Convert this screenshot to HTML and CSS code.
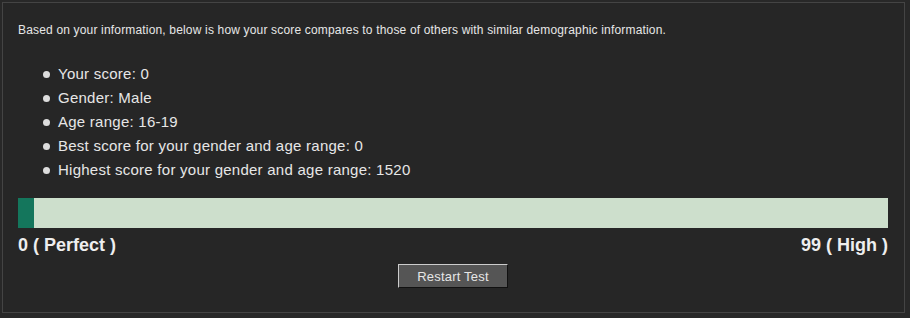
FILE: index.html
```html
<!DOCTYPE html>
<html lang="en">
<head>
    <meta charset="UTF-8">
    <title>Score Results</title>
    <link rel="stylesheet" href="styles.css">
</head>
<body>
    <div class="panel">
        <p class="intro">Based on your information, below is how your score compares to those of others with similar demographic information.</p>

        <ul class="stats">
            <li>Your score: 0</li>
            <li>Gender: Male</li>
            <li>Age range: 16-19</li>
            <li>Best score for your gender and age range: 0</li>
            <li>Highest score for your gender and age range: 1520</li>
        </ul>

        <div class="bar">
            <div class="bar-fill" style="width: 1.8%"></div>
        </div>
        <div class="bar-labels">
            <span>0 ( Perfect )</span>
            <span>99 ( High )</span>
        </div>

        <div class="actions">
            <button class="restart">Restart Test</button>
        </div>
    </div>
</body>
</html>
```

FILE: styles.css
```css
body {
    margin: 0;
    background-color: #282828;
    font-family: "Liberation Sans", Arial, sans-serif;
    color: #e6e6e6;
}

.panel {
    margin: 2px;
    width: 903px;
    height: 311px;
    box-sizing: border-box;
    border: 1px solid #444;
    background-color: #262626;
    padding: 20px 16px 0 15px;
}

.intro {
    margin: 0;
    font-size: 12px;
    line-height: 14px;
    letter-spacing: 0.17px;
}

.stats {
    margin: 25px 0 16px 0;
    padding-left: 40px;
    list-style: none;
    font-size: 15px;
    line-height: 24px;
    letter-spacing: 0.25px;
}

.stats li {
    position: relative;
}

/* bullet sits over the list padding */
.stats li::before {
    content: "";
    position: absolute;
    left: -15px;
    top: 9px;
    width: 7px;
    height: 7px;
    border-radius: 50%;
    background-color: #ddd;
}

.bar {
    height: 30px;
    background-color: #cddfcc;
    display: flex;
}

.bar-fill {
    background-color: #14765c;
}

.bar-labels {
    margin-top: 7px;
    display: flex;
    justify-content: space-between;
    font-size: 18px;
    font-weight: bold;
    line-height: 20px;
    color: #eee;
}

.actions {
    margin-top: 9px;
    display: flex;
    justify-content: center;
}

.restart {
    width: 110px;
    height: 24px;
    background-color: #555;
    color: #e6e6e6;
    font-family: "Liberation Sans", Arial, sans-serif;
    font-size: 13px;
    letter-spacing: 0.2px;
    border: 1px solid;
    border-color: #ccc #111 #111 #ccc;
    padding: 0;
}
```
